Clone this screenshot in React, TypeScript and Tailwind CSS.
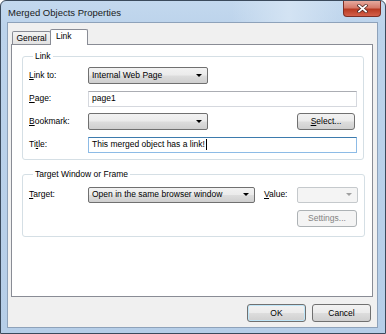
import React from "react";

// Win7-style "Merged Objects Properties" dialog

const btn =
  "flex items-center justify-center rounded-[3px] border border-[#707070] bg-[linear-gradient(to_bottom,#f2f2f2_0%,#ebebeb_48%,#dddddd_52%,#cfcfcf_100%)] leading-none";

function Arrow({ disabled = false }: { disabled?: boolean }) {
  return (
    <span
      className={`ml-auto mr-[5px] h-0 w-0 border-x-[3px] border-t-[3px] border-x-transparent ${
        disabled ? "border-t-[#a0a0a0]" : "border-t-black"
      }`}
    />
  );
}

function Combo({ w, text, disabled = false, h = "h-[17px]" }: { w: string; text?: string; disabled?: boolean; h?: string }) {
  return (
    <div
      className={`${w} ${h} flex items-center rounded-[2px] border leading-none ${
        disabled
          ? "border-[#c5c9cc] bg-[#f4f4f4]"
          : "border-[#707070] bg-[linear-gradient(to_bottom,#f2f2f2_0%,#ebebeb_48%,#dddddd_52%,#cfcfcf_100%)]"
      }`}
    >
      <span className="pl-[3px] whitespace-nowrap">{text}</span>
      <Arrow disabled={disabled} />
    </div>
  );
}

function Label({ children, w = "w-[59px]" }: { children: React.ReactNode; w?: string }) {
  return <span className={`${w} shrink-0 whitespace-nowrap leading-none`}>{children}</span>;
}

export default function App() {
  return (
    <div className="w-[386px] h-[334px] font-['Liberation_Sans',Arial,sans-serif] text-[8.5px] text-black">
      <div className="relative flex h-full flex-col rounded-t-[6px] border border-[#3b4a5c] bg-[linear-gradient(to_bottom,#c3d8ee_0%,#bcd3eb_8%,#b6cee8_100%)] pl-[6px] pr-[7px] pb-[5px]">
        {/* Title bar */}
        <div className="flex h-[21px] items-center pl-[1px] pt-[2px] bg-[linear-gradient(to_right,transparent_0%,transparent_60%,#d3e3f3_75%,transparent_90%)] -ml-[6px] -mr-[7px] pl-[7px]">
          <span className="text-[9.5px] text-[#1a1a1a] leading-none">Merged Objects Properties</span>
        </div>
        <div className="absolute right-[4px] top-0 flex h-[16px] w-[38px] items-center justify-center rounded-b-[4px] border border-t-0 border-[#7d2e25] bg-[linear-gradient(to_bottom,#e6aa9e_0%,#d57a6a_45%,#b83a22_55%,#d4604a_100%)]">
          <svg width="11" height="9" viewBox="0 0 11 9">
            <path d="M2 1.5 L9 7.5 M9 1.5 L2 7.5" stroke="#4a2420" strokeWidth="3.2" strokeLinecap="square" />
            <path d="M2 1.5 L9 7.5 M9 1.5 L2 7.5" stroke="#ffffff" strokeWidth="1.8" strokeLinecap="square" />
          </svg>
        </div>

        {/* Client area */}
        <div className="flex flex-1 flex-col border border-[#8ea2ba] bg-[#f0f0f0] px-[3px] pt-[6px]">
          {/* Tabs */}
          <div className="flex h-[16px] items-end pl-[1px]">
            <div className="flex h-[14px] w-[39px] items-center justify-center rounded-t-[2px] border border-b-0 border-[#898c95] bg-[linear-gradient(to_bottom,#f3f3f3,#e1e1e1)] leading-none">
              General
            </div>
            <div className="relative z-10 -ml-px flex h-[16px] w-[38px] items-start rounded-t-[2px] border border-b-0 border-[#898c95] bg-white pl-[5px] pt-[2px] leading-none">
              Link
            </div>
          </div>

          {/* Tab panel */}
          <div className="-mt-px h-[253px] w-[362px] border border-[#898c95] bg-white">
            <fieldset className="ml-[10px] mr-[8px] mt-[6px] rounded-[3px] border border-[#d5dfe5] pl-[6px] pr-[6px] pt-[3px] pb-[3px]">
              <legend className="ml-[4px] px-[2px] leading-[10px]">Link</legend>
              <div className="flex h-[23px] items-center">
                <Label>
                  <u>L</u>ink to:
                </Label>
                <Combo w="w-[120px]" text="Internal Web Page" />
              </div>
              <div className="flex h-[23px] items-center">
                <Label>
                  <u>P</u>age:
                </Label>
                <div className="flex h-[16px] flex-1 items-center border border-[#d5d8de] border-t-[#abadb3] bg-white pl-[3px] leading-none">
                  page1
                </div>
              </div>
              <div className="flex h-[23px] items-center">
                <Label>
                  <u>B</u>ookmark:
                </Label>
                <Combo w="w-[120px]" />
                <div className={`${btn} ml-auto mr-[2px] h-[17px] w-[58px]`}>
                  <span>
                    <u>S</u>elect...
                  </span>
                </div>
              </div>
              <div className="flex h-[23px] items-center">
                <Label>
                  Ti<u>t</u>le:
                </Label>
                <div className="flex h-[16px] flex-1 items-center border border-[#8dbbe6] border-t-[#3d7bad] bg-white pl-[3px] leading-none">
                  <span className="whitespace-nowrap">This merged object has a link!</span>
                  <span className="ml-px h-[11px] w-px bg-black" />
                </div>
              </div>
            </fieldset>

            <fieldset className="ml-[10px] mr-[8px] mt-[9px] rounded-[3px] border border-[#d5dfe5] pl-[6px] pr-[6px] pt-[4px] pb-[9px]">
              <legend className="ml-[4px] px-[2px] leading-[10px]">Target Window or Frame</legend>
              <div className="flex h-[23px] items-center">
                <Label>
                  <u>T</u>arget:
                </Label>
                <Combo w="w-[167px]" h="h-[16px]" text="Open in the same browser window" />
                <Label w="w-[33px] ml-[9px]">
                  <u>V</u>alue:
                </Label>
                <Combo w="w-[61px]" h="h-[16px]" disabled />
              </div>
              <div className="mt-[4px] flex justify-end">
                <div className="mr-[1px] flex h-[17px] w-[60px] items-center justify-center rounded-[3px] border border-[#adb2b5] bg-[#f4f4f4] leading-none text-[#838383]">
                  Settings...
                </div>
              </div>
            </fieldset>
          </div>

          {/* Dialog buttons */}
          <div className="mt-[7px] flex justify-end gap-[6px] pr-[3px]">
            <div className={`${btn} h-[18px] w-[59px] border-[#3c7fb1] shadow-[inset_0_0_0_1px_#bfe6f8]`}>OK</div>
            <div className={`${btn} h-[18px] w-[59px]`}>Cancel</div>
          </div>
        </div>
      </div>
    </div>
  );
}
